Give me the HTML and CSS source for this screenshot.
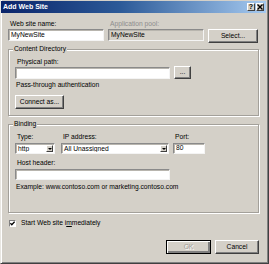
FILE: index.html
```html
<!DOCTYPE html>
<html>
<head>
<meta charset="utf-8">
<link rel="stylesheet" href="styles.css">
</head>
<body>
<div class="win">
  <div class="titlebar">
    <span class="title">Add Web Site</span>
    <div class="tbtns">
      <span class="tbtn">?</span>
      <span class="tbtn">
        <svg width="6" height="6" viewBox="0 0 6 6"><path d="M0.5 0.5 L5.5 5.5 M5.5 0.5 L0.5 5.5" stroke="#000" stroke-width="1.4"/></svg>
      </span>
    </div>
  </div>
  <div class="content">
    <div class="site-grid">
      <div class="lbl">Web site name:</div>
      <div class="lbl dis">Application pool:</div>
      <div></div>
      <div class="input">MyNewSite</div>
      <div class="input ro">MyNewSite</div>
      <div class="btn select-btn">Select...</div>
    </div>

    <fieldset class="group g1">
      <legend>Content Directory</legend>
      <div class="lbl">Physical path:</div>
      <div class="path-row">
        <div class="input path"></div>
        <div class="btn dots">...</div>
      </div>
      <div class="note pass">Pass-through authentication</div>
      <div class="btn connect">Connect as...</div>
    </fieldset>

    <fieldset class="group g2">
      <legend>Binding</legend>
      <div class="bind-grid">
        <div class="lbl">Type:</div>
        <div class="lbl">IP address:</div>
        <div class="lbl">Port:</div>
        <div class="combo"><span class="combo-text">http</span><span class="arrow"><i></i></span></div>
        <div class="combo"><span class="combo-text">All Unassigned</span><span class="arrow"><i></i></span></div>
        <div class="input port">80</div>
      </div>
      <div class="lbl host-lbl">Host header:</div>
      <div class="input host"></div>
      <div class="note example">Example: www.contoso.com or marketing.contoso.com</div>
    </fieldset>

    <div class="check-row">
      <span class="checkbox">
        <svg width="5" height="5" viewBox="0 0 5 5"><path d="M0.4 2.2 L1.8 3.7 L4.6 0.6" fill="none" stroke="#000" stroke-width="1.3"/></svg>
      </span>
      <span class="check-text">Start Web site i<u>m</u>mediately</span>
    </div>

    <div class="actions">
      <div class="btn ok">OK</div>
      <div class="btn cancel">Cancel</div>
    </div>
  </div>
</div>
</body>
</html>
```

FILE: styles.css
```css
html, body {
  margin: 0;
  padding: 0;
}

body {
  font-family: "Liberation Sans", Arial, sans-serif;
  font-size: 6.7px;
  line-height: 8px;
  color: #000;
  background: #d4d0c8;
}

.win {
  width: 269px;
  height: 264px;
  box-sizing: border-box;
  background: #d4d0c8;
  border-left: 1px solid #e8e6e1;
  border-right: 1px solid #404040;
  border-bottom: 1px solid #404040;
  box-shadow: inset 1px 0 #ffffff, inset -1px -1px #808080;
  padding: 1px 1px 0 0;
  display: flex;
  flex-direction: column;
}

.titlebar {
  height: 12px;
  margin-right: 1px;
  background: linear-gradient(90deg, #0a246a 0%, #2c5a98 45%, #a6caf0 100%);
  display: flex;
  align-items: center;
  justify-content: space-between;
  padding: 0 2px 0 2px;
}

.title {
  color: #fff;
  font-weight: bold;
  font-size: 7px;
}

.tbtns {
  display: flex;
  gap: 1px;
}

.tbtn {
  width: 8px;
  height: 8px;
  box-sizing: border-box;
  background: #d4d0c8;
  border: 1px solid;
  border-color: #fff #404040 #404040 #fff;
  display: flex;
  align-items: center;
  justify-content: center;
  font-weight: bold;
  font-size: 7px;
  line-height: 6px;
}

.content {
  padding: 7px 8px 0 7px;
  display: flex;
  flex-direction: column;
}

.lbl {
  padding-left: 2px;
  height: 8px;
  white-space: nowrap;
}

.lbl.dis {
  color: #8c8c8c;
}

.site-grid {
  display: grid;
  grid-template-columns: 96px 96px 50px;
  grid-template-rows: 9px auto;
  column-gap: 4px;
  align-items: start;
}

.input {
  box-sizing: border-box;
  height: 12px;
  background: #fff;
  border: 1px solid;
  border-color: #8a8a8a #f4f4f4 #f4f4f4 #8a8a8a;
  box-shadow: inset 1px 1px #b8b5ae;
  padding: 1px 2px 0 2px;
  white-space: nowrap;
  overflow: hidden;
}

.input.ro {
  background: #d4d0c8;
}

.btn {
  box-sizing: border-box;
  background: #d4d0c8;
  border: 1px solid;
  border-color: #ffffff #404040 #404040 #ffffff;
  box-shadow: inset -1px -1px #808080;
  display: flex;
  align-items: center;
  justify-content: center;
  white-space: nowrap;
}

.select-btn {
  height: 14px;
}

.group {
  margin: 2px 0 0 0;
  padding: 5px 5px 6px 6px;
  border: 1px solid #a3a09a;
  box-shadow: inset 1px 1px #fff, 1px 1px #fff;
  min-width: 0;
}

.group legend {
  padding: 0 1px;
  margin-left: -2px;
  line-height: 8px;
  background: #d4d0c8;
}

.path-row {
  display: flex;
  align-items: flex-end;
  gap: 4px;
}

.input.path {
  width: 155px;
}

.dots {
  width: 17px;
  height: 13px;
  padding-bottom: 2px;
}

.note {
  padding-left: 1px;
  white-space: nowrap;
}

.pass {
  margin-top: 2px;
}

.connect {
  margin-top: 6px;
  width: 49px;
  height: 14px;
}

.g2 {
  margin-top: 4px;
  padding-bottom: 21px;
}

.bind-grid {
  display: grid;
  grid-template-columns: 40px 108px 30px;
  grid-template-rows: 10px auto;
  column-gap: 6px;
}

.bind-grid > :nth-child(3n+3) {
  margin-left: -2px;
}

.combo {
  box-sizing: border-box;
  height: 11px;
  background: #fff;
  border: 1px solid;
  border-color: #8a8a8a #f4f4f4 #f4f4f4 #8a8a8a;
  box-shadow: inset 1px 1px #b8b5ae;
  display: flex;
  padding: 1px;
}

.combo-text {
  flex: 1;
  padding-left: 1px;
  line-height: 8px;
  white-space: nowrap;
  overflow: hidden;
}

.arrow {
  width: 7px;
  box-sizing: border-box;
  background: #d4d0c8;
  border: 1px solid;
  border-color: #fff #404040 #404040 #fff;
  display: flex;
  align-items: center;
  justify-content: center;
}

.arrow i {
  display: block;
  width: 0;
  height: 0;
  border-left: 2px solid transparent;
  border-right: 2px solid transparent;
  border-top: 2px solid #000;
}

.input.port {
  height: 11px;
  padding-top: 0;
}

.host-lbl {
  margin-top: 5px;
  margin-bottom: 2px;
}

.input.host {
  width: 155px;
  height: 11px;
}

.example {
  margin-top: 3px;
  padding-left: 1px;
}

.check-row {
  margin-top: 6px;
  display: flex;
  align-items: center;
  height: 8px;
  padding-left: 1px;
}

.checkbox {
  width: 7px;
  height: 7px;
  box-sizing: border-box;
  background: #fff;
  border: 1px solid;
  border-color: #808080 #fff #fff #808080;
  display: flex;
  align-items: center;
  justify-content: center;
}

.check-text {
  margin-left: 5px;
}

.check-text u {
  text-decoration: underline;
}

.actions {
  margin-top: 13px;
  display: flex;
  justify-content: flex-end;
  gap: 4px;
}

.ok {
  width: 45px;
  height: 14px;
  border-color: #000;
  box-shadow: inset 1px 1px #fff, inset -2px -2px #808080;
  color: #a09d96;
  text-shadow: 1px 1px #fff;
}

.cancel {
  width: 44px;
  height: 14px;
}
```
